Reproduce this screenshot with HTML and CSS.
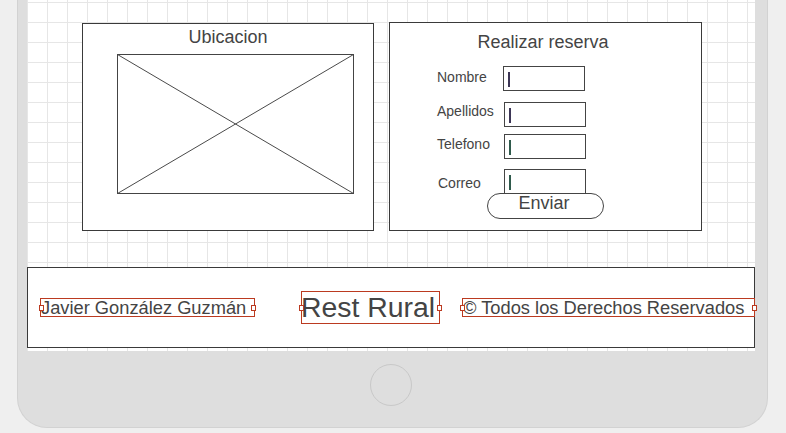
FILE: index.html
```html
<!DOCTYPE html>
<html lang="es">
<head>
<meta charset="utf-8">
<title>Rest Rural</title>
<link rel="stylesheet" href="styles.css">
</head>
<body>
<div class="device">
  <div class="screen">
    <div class="panels">
      <section class="panel panel-map">
        <h2 class="panel-title">Ubicacion</h2>
        <svg class="map-ph" width="237" height="140" viewBox="0 0 237 140">
          <rect x="0.5" y="0.5" width="236" height="139" fill="#fff" stroke="#444" stroke-width="1"/>
          <line x1="0.5" y1="0.5" x2="236.5" y2="139.5" stroke="#4a4a4a" stroke-width="1"/>
          <line x1="236.5" y1="0.5" x2="0.5" y2="139.5" stroke="#4a4a4a" stroke-width="1"/>
        </svg>
      </section>
      <section class="panel panel-form">
        <h2 class="panel-title form-title">Realizar reserva</h2>
        <div class="form">
          <div class="row row-1"><span class="label">Nombre</span><span class="field"><span class="caret"></span></span></div>
          <div class="row row-2"><span class="label">Apellidos</span><span class="field"><span class="caret"></span></span></div>
          <div class="row row-3"><span class="label">Telefono</span><span class="field"><span class="caret caret-teal"></span></span></div>
          <div class="row row-4"><span class="label">Correo</span><span class="field"><span class="caret caret-teal"></span></span></div>
          <div class="btn">Enviar</div>
        </div>
      </section>
    </div>
    <footer class="footer">
      <div class="tag tag-author">Javier González Guzmán<span class="handle handle-l"></span><span class="handle handle-r"></span></div>
      <div class="tag tag-brand">Rest Rural<span class="handle handle-l"></span><span class="handle handle-r"></span></div>
      <div class="tag tag-rights">© Todos los Derechos Reservados<span class="handle handle-l"></span><span class="handle handle-r"></span></div>
    </footer>
  </div>
  <div class="home"></div>
</div>
</body>
</html>
```

FILE: styles.css
```css
* {
  box-sizing: border-box;
  margin: 0;
  padding: 0;
}

html, body {
  background: #efefef;
}

body {
  font-family: "Liberation Sans", Arial, sans-serif;
  color: #444;
  height: 433px;
  overflow: hidden;
}

.device {
  margin-left: 17px;
  width: 751px;
  height: 428px;
  background: #dedede;
  border: 1px solid #d2d2d2;
  border-top: none;
  border-radius: 0 0 30px 30px;
  padding: 0 12px 0 9px;
}

.screen {
  height: 351px;
  background-color: #fff;
  background-image:
    linear-gradient(to right, #e6e6e6 1px, transparent 1px),
    linear-gradient(to bottom, #e6e6e6 1px, transparent 1px);
  background-size: 20px 20px;
  background-position: 0 2px;
}

.panels {
  display: flex;
  align-items: flex-end;
  height: 231px;
  padding-left: 55px;
  gap: 15px;
}

.panel {
  background: #fff;
  border: 1px solid #3a3a3a;
}

.panel-title {
  font-size: 18px;
  line-height: 20px;
  font-weight: normal;
  text-align: center;
  color: #444;
}

.panel-map {
  width: 292px;
  height: 208px;
  padding-top: 3px;
}

.map-ph {
  display: block;
  margin: 7px 0 0 34px;
}

.panel-form {
  width: 313px;
  height: 209px;
  padding-top: 9px;
}

.form-title {
  padding-right: 5px;
}

.form {
  margin-top: 14px;
  padding-left: 47px;
}

.row {
  display: flex;
  align-items: flex-start;
  height: 25px;
}

.label {
  display: block;
  width: 67px;
  font-size: 14px;
  line-height: 16px;
  color: #444;
}

.row-1 .label { width: 66px; margin-top: 3px; }
.row-2 { margin-top: 11px; }
.row-2 .label { margin-top: 1px; }
.row-3 { margin-top: 7px; }
.row-3 .label { margin-top: 2px; }
.row-4 { margin-top: 10px; }
.row-4 .label { margin-top: 6px; padding-left: 1px; }

.field {
  display: block;
  width: 82px;
  height: 25px;
  border: 1px solid #444;
  background: #fff;
  padding: 5px 0 0 4px;
}

.caret {
  display: block;
  width: 2px;
  height: 15px;
  background: #3d3656;
}

.caret-teal {
  background: #2f5a4c;
}

.btn {
  position: relative;
  z-index: 1;
  width: 117px;
  height: 26px;
  margin: -1px 0 0 50px;
  border: 1px solid #444;
  border-radius: 13px;
  background: #fff;
  font-size: 18px;
  line-height: 18px;
  text-align: center;
  padding-right: 3px;
  color: #444;
}

.footer {
  margin-top: 36px;
  height: 81px;
  border: 1px solid #3a3a3a;
  background: #fff;
  display: flex;
  align-items: center;
  padding-left: 12px;
}

.tag {
  position: relative;
  flex-shrink: 0;
  border: 1px solid #bb3a20;
  font-size: 18.3px;
  line-height: 17px;
  white-space: nowrap;
  color: #444;
}

.tag-author {
  width: 215px;
}

.tag-brand {
  width: 139px;
  margin-left: 46px;
  font-size: 28.4px;
  line-height: 31px;
  text-indent: -1px;
}

.tag-rights {
  width: 293px;
  margin-left: 22px;
}

.handle {
  position: absolute;
  top: calc(50% - 3px);
  width: 5px;
  height: 6px;
  background: #fff;
  border: 1px solid #bb3a20;
}

.handle-l { left: -3px; }
.handle-r { right: -3px; }
.tag-author .handle-l { left: -2px; }
.tag-author .handle-r { right: -2px; }

.home {
  width: 42px;
  height: 42px;
  margin: 13px auto 0;
  border-radius: 50%;
  border: 1px solid #c8c8c8;
}
```
